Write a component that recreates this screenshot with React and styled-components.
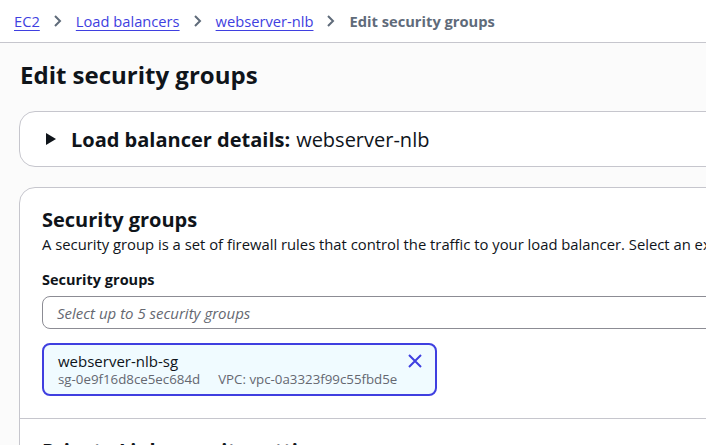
import React from "react";
import styled, { createGlobalStyle } from "styled-components";

const GlobalStyle = createGlobalStyle`
  html, body {
    margin: 0;
    padding: 0;
    overflow: hidden;
    background: #fbfbfb;
    font-family: "Open Sans", "Noto Sans", sans-serif;
    color: #0f141a;
  }
`;

const Page = styled.div`
  width: 1000px;
  height: 445px;
  overflow: hidden;
`;

const Breadcrumbs = styled.nav`
  height: 42px;
  background: #ffffff;
  border-bottom: 1px solid #c6c6cd;
  display: flex;
  align-items: center;
  padding-left: 14px;
  font-size: 14.7px;
`;

const Crumb = styled.a`
  color: #3f3fe0;
  text-decoration: underline;
  text-underline-offset: 3px;
`;

const Current = styled.span`
  color: #5f6b7a;
  font-weight: 700;
`;

const Sep = styled.span`
  display: flex;
  align-items: center;
  margin: 0 13px;
  color: #5f6b7a;
`;

const Main = styled.main`
  padding: 16px 0 0 19px;
`;

const Title = styled.h1`
  margin: 0 0 20px 1px;
  font-size: 24px;
  font-weight: 700;
  line-height: 32px;
`;

const Card = styled.section`
  background: #ffffff;
  border: 1px solid #c6c6cd;
  border-radius: 16px;
  margin-bottom: 20px;
`;

const ExpandHeader = styled.div`
  height: 54px;
  display: flex;
  align-items: center;
  padding-left: 26px;
  font-size: 20px;
`;

const Caret = styled.span`
  width: 0;
  height: 0;
  border-top: 6px solid transparent;
  border-bottom: 6px solid transparent;
  border-left: 10px solid #0f141a;
  margin-right: 15px;
`;

const Strong = styled.span`
  font-weight: 700;
  margin-right: 6px;
`;

const Section = styled.div`
  padding: 18px 22px 22px;
  border-bottom: ${(p) => (p.$divided ? "1px solid #c6c6cd" : "none")};
`;

const SectionTitle = styled.h2`
  margin: 0;
  font-size: 20px;
  font-weight: 700;
  line-height: 28px;
`;

const Description = styled.p`
  margin: 0 0 16px;
  font-size: 14.8px;
  line-height: 20px;
  white-space: nowrap;
`;

const Label = styled.div`
  font-size: 14.5px;
  font-weight: 700;
  line-height: 20px;
  margin-bottom: 6px;
`;

const Input = styled.div`
  width: 100%;
  box-sizing: border-box;
  height: 33px;
  border: 1px solid #8c8c94;
  border-radius: 8px;
  display: flex;
  align-items: center;
  padding-left: 14px;
  font-size: 15px;
  font-style: italic;
  color: #656871;
  background: #ffffff;
`;

const Token = styled.div`
  margin-top: 14px;
  width: 395px;
  box-sizing: border-box;
  border: 2px solid #3f3fe0;
  border-radius: 8px;
  background: #f0fbff;
  padding: 6px 12px 6px 14px;
  display: flex;
  justify-content: space-between;
`;

const TokenName = styled.div`
  font-size: 15px;
  line-height: 20px;
`;

const TokenMeta = styled.div`
  font-size: 13.3px;
  line-height: 17px;
  color: #656871;
  display: flex;
  gap: 18px;
`;

const Dismiss = styled.button`
  border: none;
  background: none;
  padding: 0;
  margin-top: 2px;
  height: 16px;
  color: #3f3fe0;
  display: flex;
`;

const Chevron = () => (
  <svg width="10" height="14" viewBox="0 0 10 14" fill="none">
    <path d="M2 2l5 5-5 5" stroke="currentColor" strokeWidth="2" />
  </svg>
);

const crumbs = ["EC2", "Load balancers", "webserver-nlb"];

export default function App() {
  return (
    <Page>
      <GlobalStyle />
      <Breadcrumbs>
        {crumbs.map((c) => (
          <React.Fragment key={c}>
            <Crumb href="#">{c}</Crumb>
            <Sep>
              <Chevron />
            </Sep>
          </React.Fragment>
        ))}
        <Current>Edit security groups</Current>
      </Breadcrumbs>
      <Main>
        <Title>Edit security groups</Title>
        <Card>
          <ExpandHeader>
            <Caret />
            <Strong>Load balancer details:</Strong>
            webserver-nlb
          </ExpandHeader>
        </Card>
        <Card>
          <Section $divided>
            <SectionTitle>Security groups</SectionTitle>
            <Description>
              A security group is a set of firewall rules that control the
              traffic to your load balancer. Select an existing security group,
              or you can create a new security group.
            </Description>
            <Label>Security groups</Label>
            <Input>Select up to 5 security groups</Input>
            <Token>
              <div>
                <TokenName>webserver-nlb-sg</TokenName>
                <TokenMeta>
                  <span>sg-0e9f16d8ce5ec684d</span>
                  <span>VPC: vpc-0a3323f99c55fbd5e</span>
                </TokenMeta>
              </div>
              <Dismiss aria-label="Remove">
                <svg width="16" height="16" viewBox="0 0 16 16">
                  <path
                    d="M2 2l12 12M14 2L2 14"
                    stroke="currentColor"
                    strokeWidth="2"
                  />
                </svg>
              </Dismiss>
            </Token>
          </Section>
          <Section>
            <SectionTitle>Private Link security settings</SectionTitle>
          </Section>
        </Card>
      </Main>
    </Page>
  );
}
